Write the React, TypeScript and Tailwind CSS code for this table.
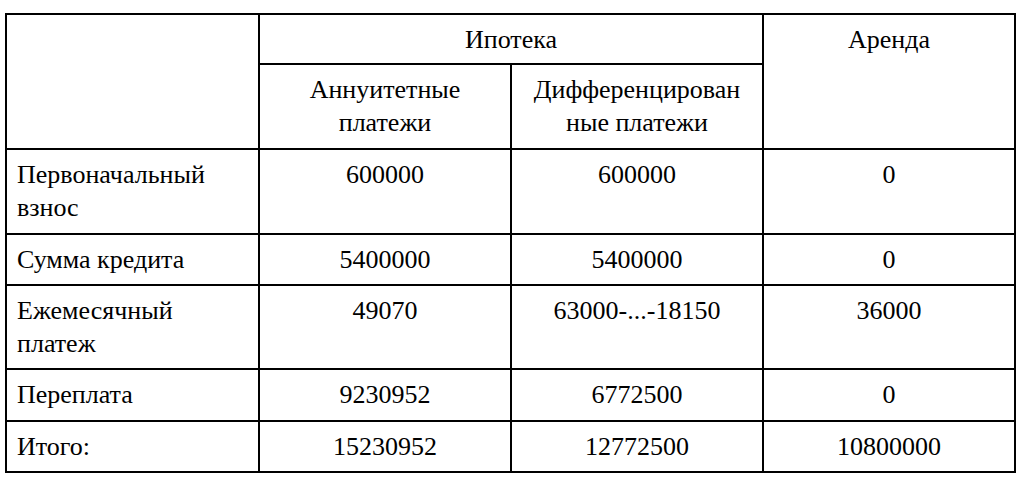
import React from "react";

const cell = "border-r-2 border-b-2 border-black pt-[8px] text-[26px] text-black flex flex-col";
const left = `${cell} px-[10px] items-start`;
const center = `${cell} px-[4px] items-center`;

function L({ children }: { children: React.ReactNode }) {
  return <div className="h-[33px] flex items-center whitespace-nowrap">{children}</div>;
}

export default function App() {
  return (
    <div className="w-[1024px] h-[484px] bg-white overflow-hidden pt-[13px] pl-[5px] font-serif">
      <div
        className="grid grid-cols-[253px_252px_252px_252px] grid-rows-[50px_85px_85px_51px_84px_52px_51px] w-fit border-l-2 border-t-2 border-black"
        style={{ fontFamily: '"Liberation Serif", serif' }}
      >
        <div className={`${left} row-span-2`}></div>
        <div className={`${center} col-span-2`}><L>Ипотека</L></div>
        <div className={`${center} row-span-2`}><L>Аренда</L></div>
        <div className={center}><L>Аннуитетные</L><L>платежи</L></div>
        <div className={center}><L>Дифференцирован</L><L>ные платежи</L></div>

        <div className={left}><L>Первоначальный</L><L>взнос</L></div>
        <div className={center}><L>600000</L></div>
        <div className={center}><L>600000</L></div>
        <div className={center}><L>0</L></div>

        <div className={left}><L>Сумма кредита</L></div>
        <div className={center}><L>5400000</L></div>
        <div className={center}><L>5400000</L></div>
        <div className={center}><L>0</L></div>

        <div className={left}><L>Ежемесячный</L><L>платеж</L></div>
        <div className={center}><L>49070</L></div>
        <div className={center}><L>63000-...-18150</L></div>
        <div className={center}><L>36000</L></div>

        <div className={left}><L>Переплата</L></div>
        <div className={center}><L>9230952</L></div>
        <div className={center}><L>6772500</L></div>
        <div className={center}><L>0</L></div>

        <div className={left}><L>Итого:</L></div>
        <div className={center}><L>15230952</L></div>
        <div className={center}><L>12772500</L></div>
        <div className={center}><L>10800000</L></div>
      </div>
    </div>
  );
}
